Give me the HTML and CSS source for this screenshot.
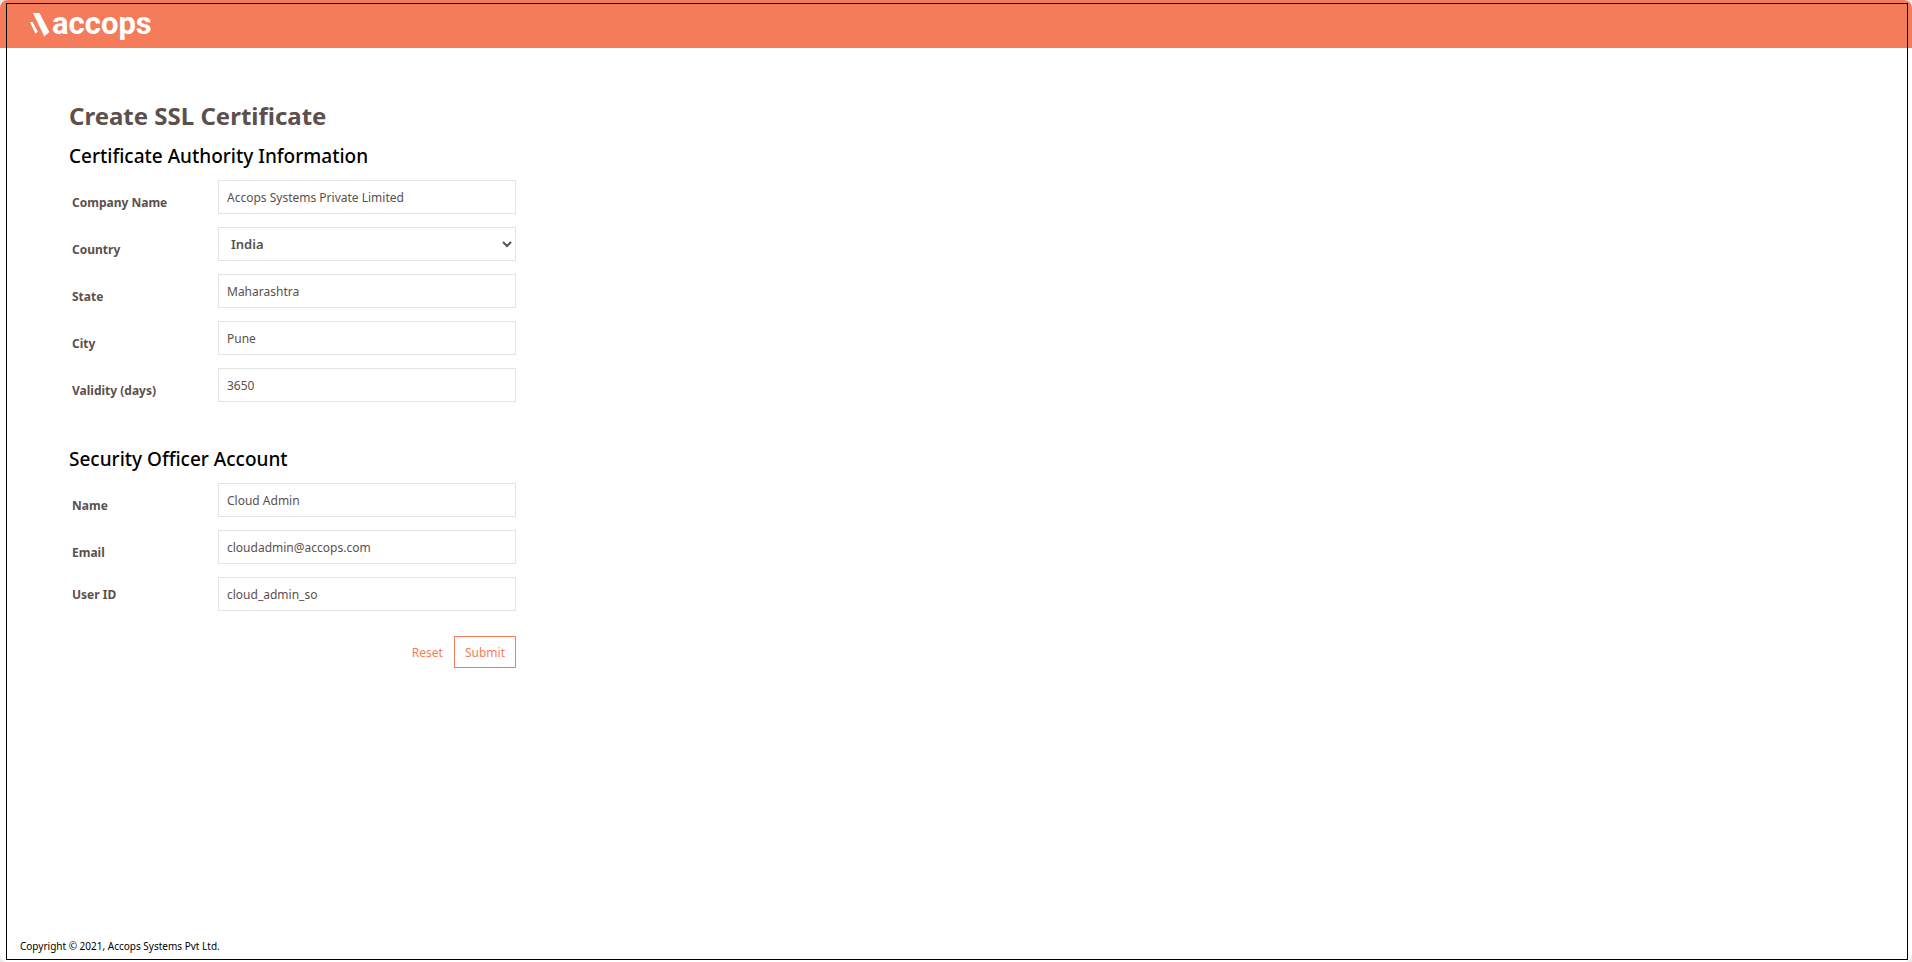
FILE: index.html
```html
<!DOCTYPE html>
<html lang="en">
<head>
<meta charset="utf-8">
<title>Create SSL Certificate</title>
<link rel="stylesheet" href="styles.css">
</head>
<body>
<div class="page">
  <header class="topbar">
    <a class="brand" href="#">
      <svg class="brand-mark" viewBox="0 0 22 28" aria-hidden="true">
        <path d="M3 3h6.500l9.800 19-5 4.500z"/>
        <path d="M0 12h2.700l5 9.700-2.200 2z"/>
      </svg>
      <span class="brand-name">accops</span>
    </a>
  </header>
  <main class="content">
    <h1 class="title">Create SSL Certificate</h1>
    <form class="form">
      <section class="group">
        <h2 class="group-title">Certificate Authority Information</h2>
        <div class="row"><label class="label" for="company">Company Name</label><input class="field" id="company" type="text" value="Accops Systems Private Limited"></div>
        <div class="row"><label class="label" for="country">Country</label><div class="select-wrap"><select class="field select" id="country"><option>India</option></select><svg class="chevron" viewBox="0 0 10 7" aria-hidden="true"><path d="M1 1l4 4 4-4"/></svg></div></div>
        <div class="row"><label class="label" for="state">State</label><input class="field" id="state" type="text" value="Maharashtra"></div>
        <div class="row"><label class="label" for="city">City</label><input class="field" id="city" type="text" value="Pune"></div>
        <div class="row"><label class="label" for="validity">Validity (days)</label><input class="field" id="validity" type="text" value="3650"></div>
      </section>
      <section class="group">
        <h2 class="group-title">Security Officer Account</h2>
        <div class="row"><label class="label" for="name">Name</label><input class="field" id="name" type="text" value="Cloud Admin"></div>
        <div class="row"><label class="label" for="email">Email</label><input class="field" id="email" type="text" value="cloudadmin@accops.com"></div>
        <div class="row"><label class="label label-middle" for="userid">User ID</label><input class="field" id="userid" type="text" value="cloud_admin_so"></div>
      </section>
      <div class="actions">
        <button class="button button-plain" type="reset">Reset</button>
        <button class="button" type="submit">Submit</button>
      </div>
    </form>
  </main>
  <footer class="footer">Copyright © 2021, Accops Systems Pvt Ltd.</footer>
  <div class="frame"></div>
</div>
</body>
</html>
```
FILE: styles.css
```css
* {
  box-sizing: border-box;
}

body {
  margin: 0;
  background: #e9e9e9;
  color: #5c504d;
  font-family: "Noto Sans", "Open Sans", sans-serif;
  font-size: 12px;
}

.page {
  position: relative;
  display: flex;
  flex-direction: column;
  min-height: 100vh;
  overflow: hidden;
  border-radius: 8px;
  background: #fff;
}

.frame {
  position: absolute;
  inset: 3px 4px 2px 6px;
  border: 1px solid #000;
  pointer-events: none;
}

.topbar {
  display: flex;
  align-items: center;
  height: 48px;
  padding: 0 30px;
  background: #f47c5a;
}

.brand {
  display: flex;
  align-items: center;
  color: #fff;
  text-decoration: none;
}

.brand-mark {
  width: 22px;
  height: 28px;
  fill: #fff;
}

.brand-name {
  font-family: Roboto, sans-serif;
  font-size: 31px;
  font-weight: 700;
  line-height: 40px;
}

.content {
  flex: 1;
  padding: 52px 69px 0;
}

.title {
  margin: 0;
  font-size: 24px;
  line-height: 32px;
  font-weight: 700;
}

.form {
  width: 447px;
  max-width: 100%;
}

.group {
  display: flex;
  flex-direction: column;
  gap: 12px;
  margin-bottom: 45px;
}

.group:last-of-type {
  margin-bottom: 25px;
}

.group-title {
  margin: 12px 0 0;
  color: #000;
  font-size: 19px;
  line-height: 24px;
  font-weight: 500;
}

.group + .group .group-title {
  margin-top: 0;
}

.row {
  display: grid;
  grid-template-columns: 146px 1fr;
  gap: 3px;
  align-items: center;
  height: 34px;
}

.row + .row {
  margin-top: 1px;
}

.label {
  padding: 12px 0 0 3px;
  font-weight: 700;
  line-height: 16px;
}

.label-middle {
  padding-top: 2px;
}

.field {
  width: 100%;
  height: 34px;
  padding: 0 8px;
  border: 1px solid #e4e4e4;
  border-radius: 0;
  background: #fff;
  color: inherit;
  font: inherit;
}

.select-wrap {
  position: relative;
}

.select {
  display: block;
  appearance: none;
  padding: 0 24px 0 12px;
  font-size: 13px;
  font-weight: 600;
}

.chevron {
  position: absolute;
  top: 14px;
  right: 4px;
  width: 10px;
  height: 7px;
  fill: none;
  stroke: #5c504d;
  stroke-width: 2;
  pointer-events: none;
}

.actions {
  display: flex;
  justify-content: flex-end;
}

.button {
  height: 32px;
  padding: 0 10px;
  border: 1px solid #f47c5a;
  background: #fff;
  color: #f47c5a;
  font: inherit;
}

.button-plain {
  border-color: transparent;
}

.footer {
  padding: 0 20px 8px;
  color: #000;
  font-size: 10px;
  line-height: 16px;
}
```
